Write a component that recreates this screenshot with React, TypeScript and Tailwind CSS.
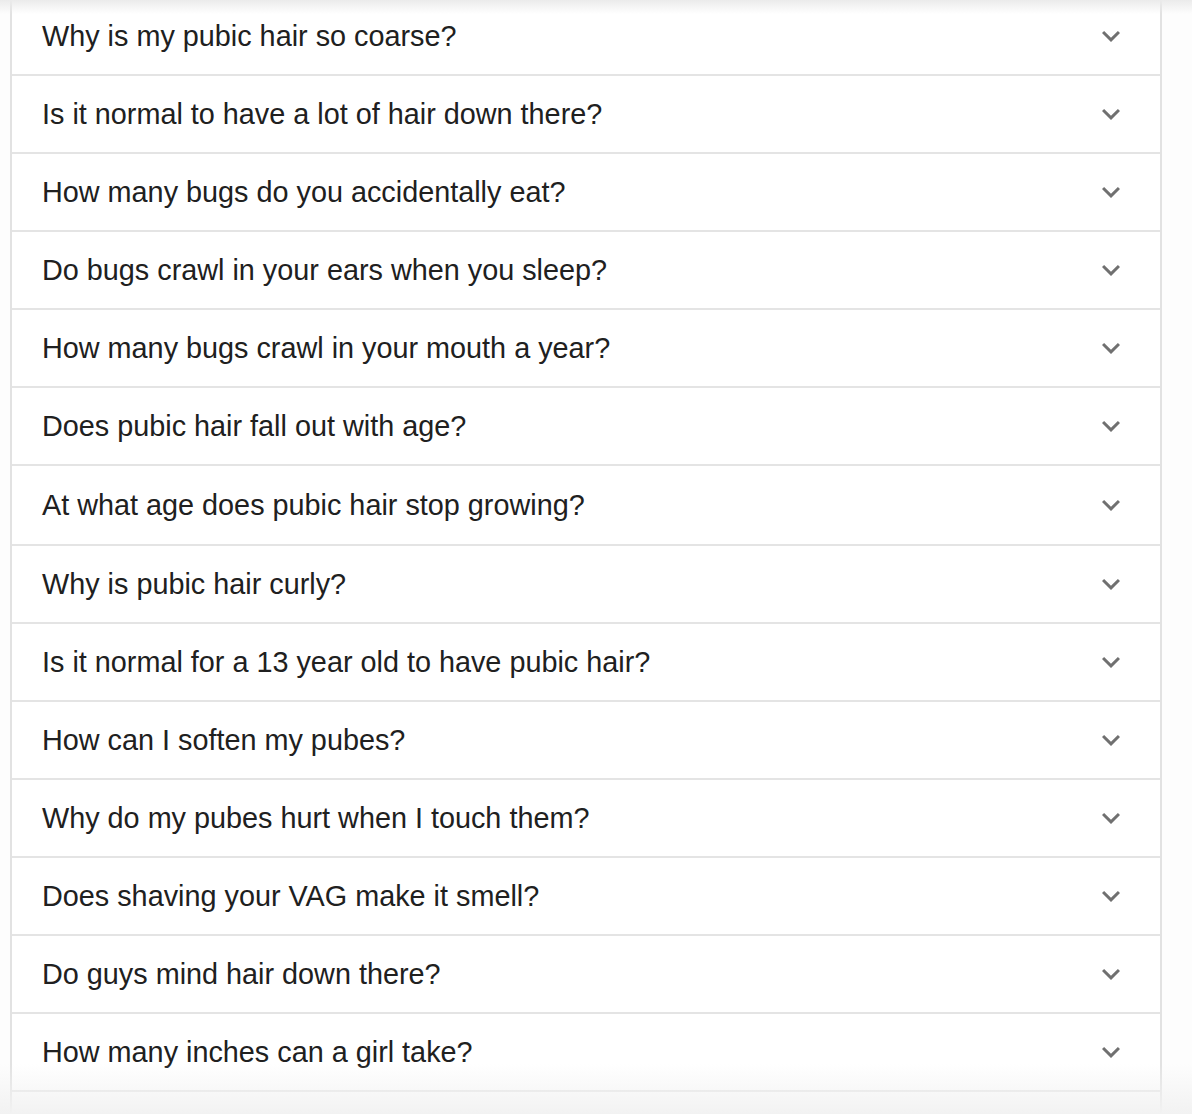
import React from "react";

const questions = [
  "Why is my pubic hair so coarse?",
  "Is it normal to have a lot of hair down there?",
  "How many bugs do you accidentally eat?",
  "Do bugs crawl in your ears when you sleep?",
  "How many bugs crawl in your mouth a year?",
  "Does pubic hair fall out with age?",
  "At what age does pubic hair stop growing?",
  "Why is pubic hair curly?",
  "Is it normal for a 13 year old to have pubic hair?",
  "How can I soften my pubes?",
  "Why do my pubes hurt when I touch them?",
  "Does shaving your VAG make it smell?",
  "Do guys mind hair down there?",
  "How many inches can a girl take?",
];

function Chevron() {
  return (
    <svg width="36" height="36" viewBox="0 0 24 24" className="shrink-0">
      <path
        d="M16.59 8.59L12 13.17 7.41 8.59 6 10l6 6 6-6z"
        fill="#707070"
      />
    </svg>
  );
}

export default function App() {
  return (
    <div
      className="relative w-[1192px] h-[1114px] overflow-hidden bg-[#fdfdfd]"
      style={{ fontFamily: '"Liberation Sans", Arial, Helvetica, sans-serif' }}
    >
      <div className="ml-[10px] w-[1152px] -mt-[2px] border-x-2 border-[#e2e2e2] bg-white">
        {questions.map((q, i) => (
          <div
            key={i}
            className={`flex items-center justify-between pl-[30px] pr-[31px] border-b-2 border-[#e4e4e4] ${
              i === 6 ? "h-[80px]" : "h-[78px]"
            }`}
          >
            <span className="text-[28.8px] leading-none text-[#202020]">
              {q}
            </span>
            <Chevron />
          </div>
        ))}
        <div className="h-[60px]" />
      </div>
      <div className="pointer-events-none absolute left-0 top-0 w-full h-[14px] bg-gradient-to-b from-[#ebebeb] to-transparent" />
      <div className="pointer-events-none absolute left-0 bottom-0 w-full h-[50px] bg-gradient-to-b from-transparent to-[#f2f2f2]" />
    </div>
  );
}
